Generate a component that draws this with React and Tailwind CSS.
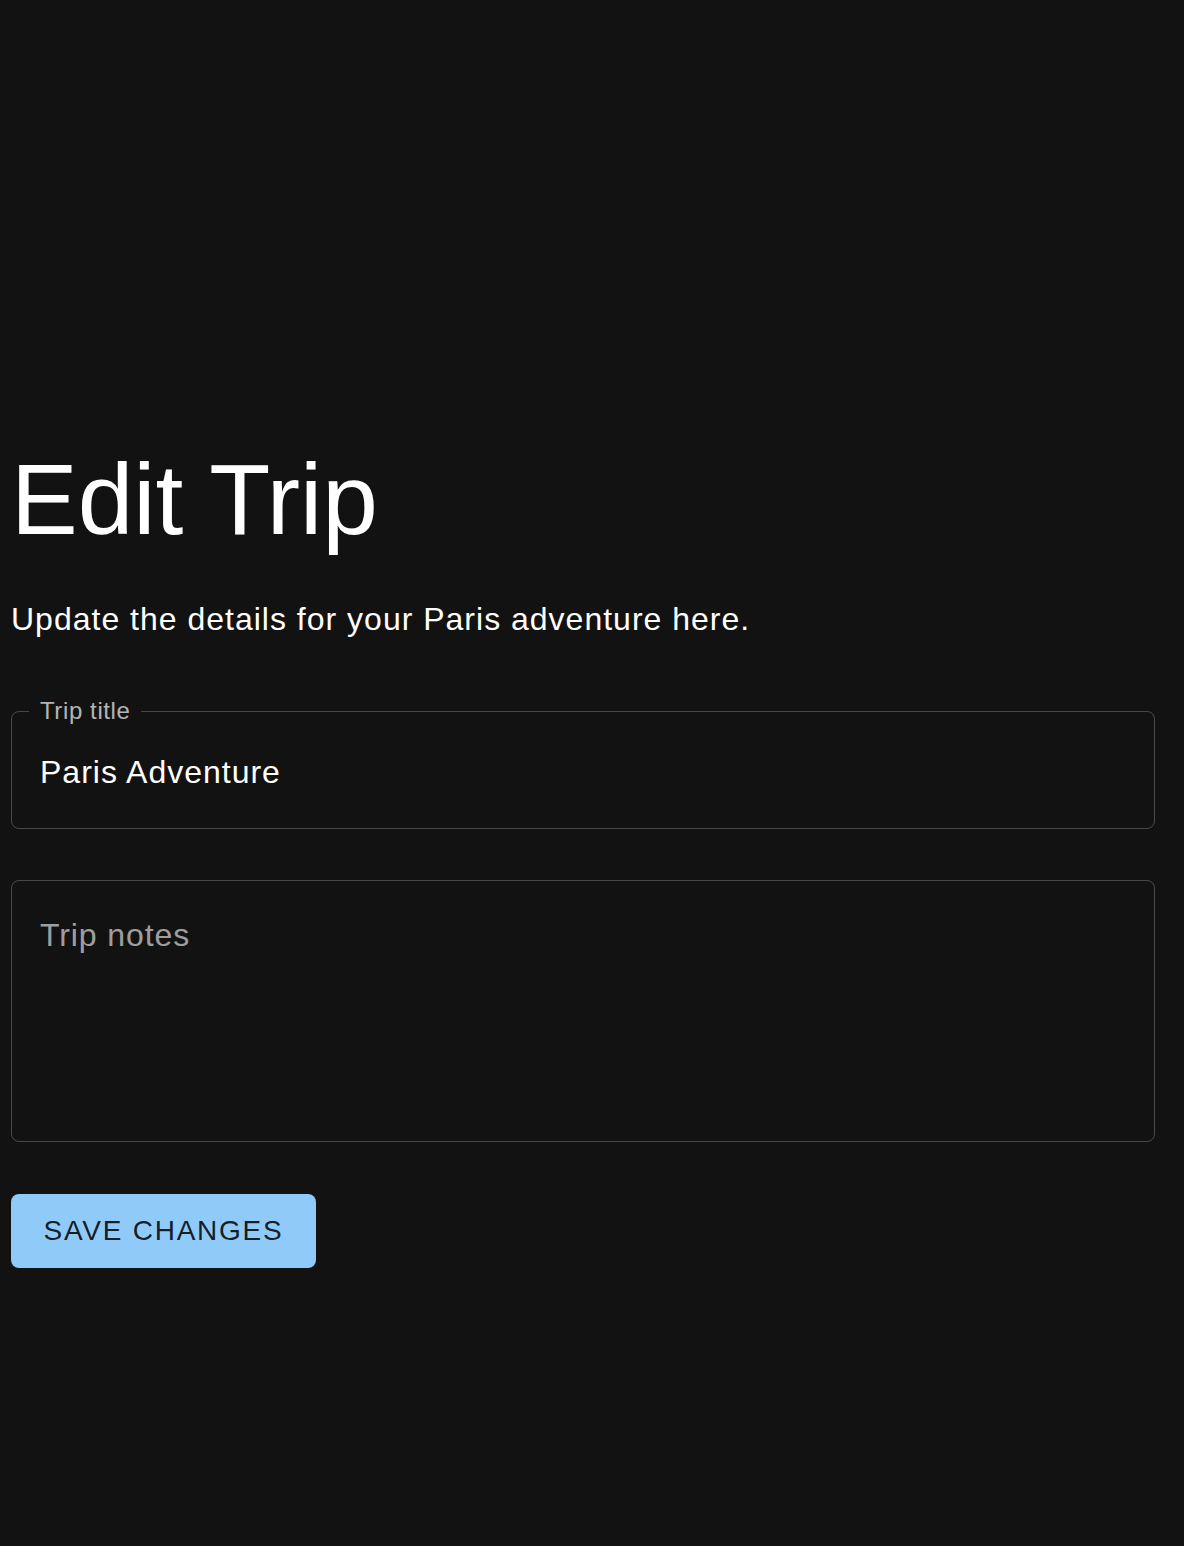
import React from "react";

const sans = { fontFamily: '"Liberation Sans", Arial, Helvetica, sans-serif' };

function OutlinedField({ label, value }) {
  return (
    <div className="relative h-[118px] rounded-[8px] border border-[rgba(255,255,255,0.23)]">
      <span className="absolute left-[17px] top-[-15px] bg-[#121212] px-[11px] text-[24px] leading-[28px] tracking-[0.6px] text-[rgba(255,255,255,0.7)]">
        {label}
      </span>
      <input
        readOnly
        value={value}
        className="block w-full bg-transparent pl-[28px] pr-[28px] pt-[37px] text-[32px] leading-[46px] tracking-[1px] text-white outline-none"
        style={sans}
      />
    </div>
  );
}

export default function App() {
  return (
    <div className="min-h-screen w-full bg-[#121212] text-white" style={sans}>
      <div className="w-[1155px] pl-[11px] pt-[443px] pb-[200px]">
        <h1 className="text-[100px] font-normal leading-[112px] text-white">Edit Trip</h1>
        <p className="mt-[40px] text-[32px] leading-[48px] tracking-[1px] text-white">
          Update the details for your Paris adventure here.
        </p>
        <div className="mt-[68px]">
          <OutlinedField label="Trip title" value="Paris Adventure" />
        </div>
        <div className="mt-[51px] h-[262px] rounded-[8px] border border-[rgba(255,255,255,0.23)]">
          <textarea
            readOnly
            placeholder="Trip notes"
            className="block h-full w-full resize-none bg-transparent pl-[28px] pr-[28px] pt-[31px] text-[32px] leading-[46px] tracking-[0.9px] text-white outline-none placeholder:text-[rgba(255,255,255,0.6)]"
            style={sans}
          />
        </div>
        <button
          type="button"
          className="mt-[52px] flex h-[74px] w-[305px] items-center justify-center rounded-[8px] bg-[#90caf9] text-[28px] font-medium tracking-[1.75px] text-[rgba(0,0,0,0.87)]"
          style={sans}
        >
          SAVE CHANGES
        </button>
      </div>
    </div>
  );
}
